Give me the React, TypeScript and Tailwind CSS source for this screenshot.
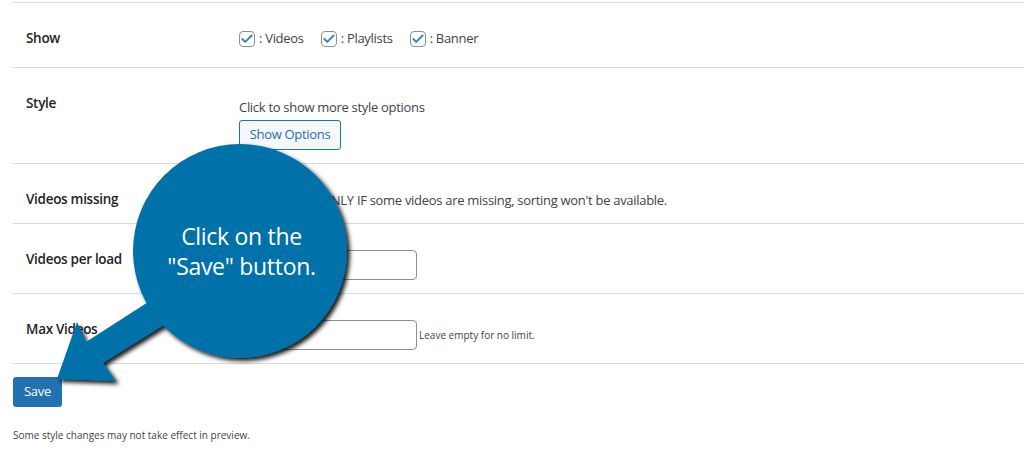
import { Check } from 'lucide-react'

function Box() {
  return (
    <span className="flex h-4 w-4 shrink-0 items-center justify-center rounded-[4px] border border-[#8c8f94] bg-white">
      <Check className="h-3.5 w-3.5 text-[#3582c4]" strokeWidth={3.2} />
    </span>
  )
}

function Row({ label, h, children }: { label: string; h: string; children: React.ReactNode }) {
  return (
    <div className={`flex border-t border-[#dcdcde] ${h}`}>
      <div className="w-[226px] shrink-0 pl-[13px] pt-[25px] text-[13.5px] leading-5 font-semibold text-[#1d2327]">
        {label}
      </div>
      <div className="flex-1">{children}</div>
    </div>
  )
}

function Callout() {
  return (
    <div className="pointer-events-none absolute left-0 top-0 h-[456px] w-[1024px]">
      <svg width="1024" height="456" className="absolute left-0 top-0">
        <defs>
          <filter id="sh" x="-20%" y="-20%" width="140%" height="140%">
            <feDropShadow dx="3" dy="3" stdDeviation="2" floodColor="#000" floodOpacity="0.9" />
          </filter>
        </defs>
        <g filter="url(#sh)" fill="#0171a9">
          <polygon points="170,288 86,342 77,322 57,379 116,381 103,363 188,310" />
          <circle cx="240" cy="251" r="107" />
        </g>
      </svg>
      <div className="absolute left-[140px] top-[221px] w-[203px] text-center text-[23px] leading-[30px] text-white">
        <div>Click on the</div>
        <div>"Save" button.</div>
      </div>
    </div>
  )
}

export default function App() {
  return (
    <div className="relative h-[456px] w-[1024px] overflow-hidden bg-white font-['Open_Sans',sans-serif] text-[13px] tracking-[-0.3px] text-[#3c434a]">
      <div className="pl-[13px] pt-[2px]">
        <Row label="Show" h="h-[65px]">
          <div className="mt-[24px] flex h-6 items-center">
            <Box />
            <span className="ml-1 mr-[17px]">: Videos</span>
            <Box />
            <span className="ml-1 mr-[17px]">: Playlists</span>
            <Box />
            <span className="ml-1">: Banner</span>
          </div>
        </Row>
        <Row label="Style" h="h-[96px]">
          <div className="pt-[29px] leading-5">Click to show more style options</div>
          <button className="mt-[3px] h-[30px] w-[102px] rounded-[3px] border border-[#2271b1] bg-[#f6f7f7] text-[13px] text-[#2271b1]">
            Show Options
          </button>
        </Row>
        <Row label="Videos missing" h="h-[60px]">
          <div className="flex items-center gap-1 pt-[26px] leading-5">
            <Box />
            <span>Check this ONLY IF some videos are missing, sorting won't be available.</span>
          </div>
        </Row>
        <Row label="Videos per load" h="h-[70px]">
          <div className="pt-[26px]">
            <input className="h-[30px] w-[178px] rounded-[4px] border border-[#8c8f94] bg-white px-2" defaultValue="" />
          </div>
        </Row>
        <Row label="Max Videos" h="h-[70px]">
          <div className="flex items-center pt-[26px]">
            <input className="h-[30px] w-[178px] rounded-[4px] border border-[#8c8f94] bg-white px-2" defaultValue="" />
            <span className="ml-[2px] text-[10px] tracking-normal">Leave empty for no limit.</span>
          </div>
        </Row>
        <div className="border-t border-[#dcdcde] pt-[13px]">
          <button className="h-[30px] w-[49px] rounded-[3px] bg-[#2271b1] text-[13px] text-white">Save</button>
          <p className="mt-[21px] text-[10px] tracking-normal">Some style changes may not take effect in preview.</p>
        </div>
      </div>
      <Callout />
    </div>
  )
}
